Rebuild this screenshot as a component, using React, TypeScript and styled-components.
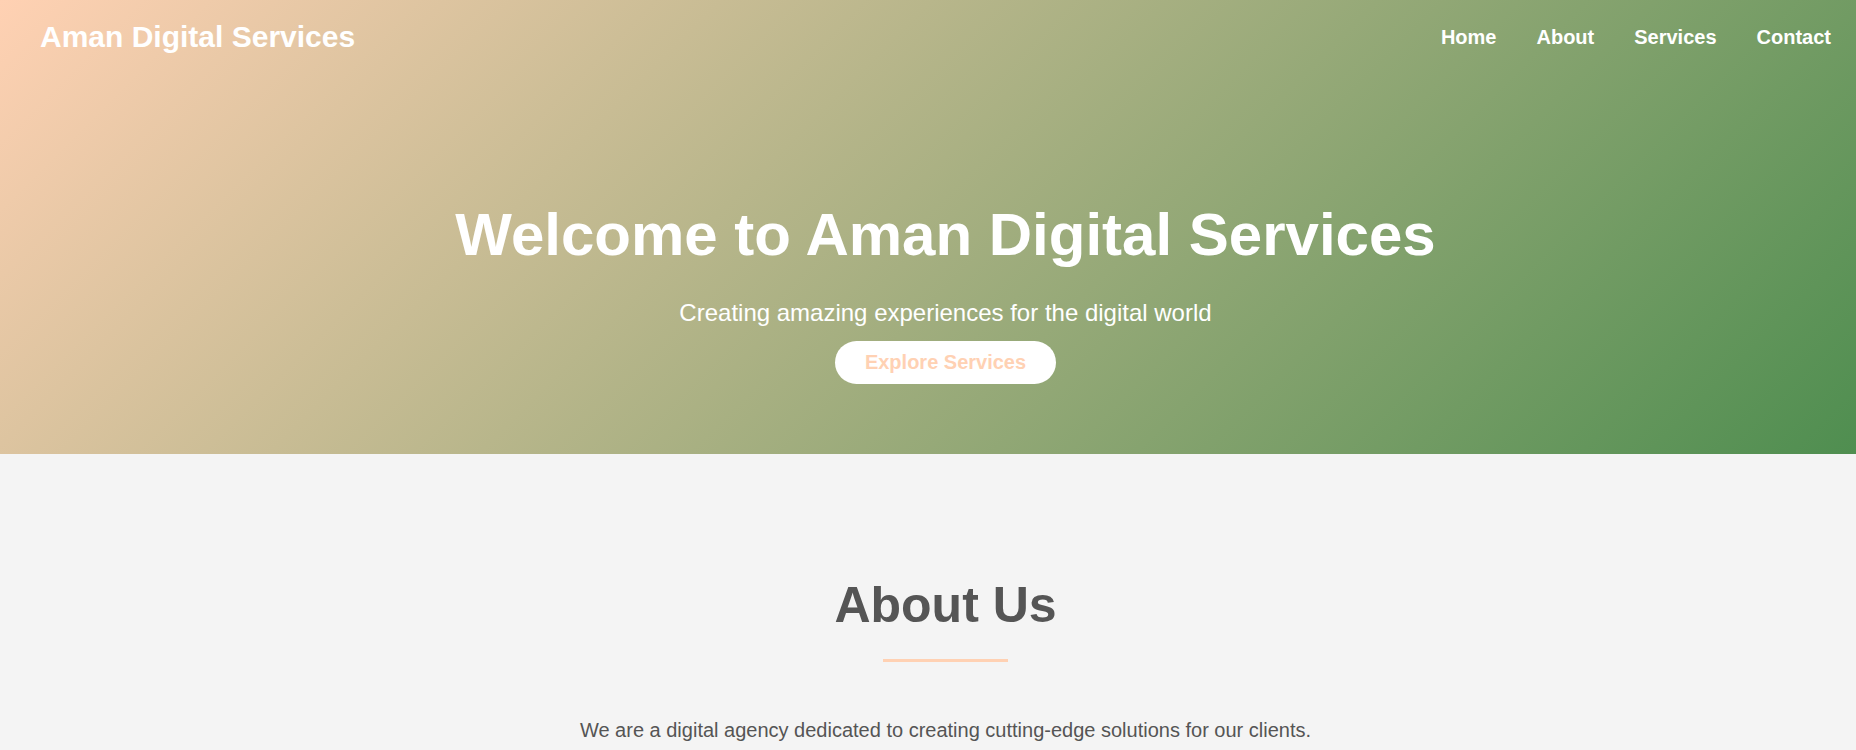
import React from "react";
import styled, { createGlobalStyle } from "styled-components";

const GlobalStyle = createGlobalStyle`
  * { box-sizing: border-box; }
  html, body { margin: 0; padding: 0; }
  body {
    font-family: "Liberation Sans", Arial, sans-serif;
    background: #f4f4f4;
    color: #555555;
  }
`;

const Hero = styled.section`
  background: linear-gradient(135deg, #ffd1b3 0%, #4f8e50 100%);
  color: #ffffff;
  padding-bottom: 70px;
`;

const Header = styled.header`
  display: flex;
  align-items: center;
  justify-content: space-between;
  padding: 20px 25px 20px 40px;
`;

const Logo = styled.div`
  font-size: 30px;
  font-weight: 700;
  line-height: normal;
`;

const NavList = styled.nav`
  display: flex;
  gap: 40px;
`;

const NavLink = styled.a`
  color: #ffffff;
  font-size: 20px;
  font-weight: 700;
  text-decoration: none;
`;

const HeroContent = styled.div`
  display: flex;
  flex-direction: column;
  align-items: center;
  text-align: center;
  padding: 126px 0 0 35px;
`;

const HeroTitle = styled.h1`
  margin: 0;
  font-size: 60px;
  font-weight: 700;
  line-height: normal;
`;

const HeroSubtitle = styled.p`
  margin: 30px 0 14px;
  font-size: 24px;
  line-height: normal;
`;

const CtaButton = styled.a`
  display: inline-block;
  background: #ffffff;
  color: #ffd1b3;
  font-size: 20px;
  font-weight: 700;
  padding: 10px 30px;
  border-radius: 30px;
  text-decoration: none;
  line-height: normal;
`;

const About = styled.section`
  background: #f4f4f4;
  display: flex;
  flex-direction: column;
  align-items: center;
  text-align: center;
  padding: 122px 0 80px 35px;
`;

const SectionTitle = styled.h2`
  margin: 0;
  font-size: 50px;
  font-weight: 700;
  color: #555555;
  line-height: normal;
`;

const Divider = styled.div`
  width: 125px;
  height: 3px;
  background: #ffd1b3;
  margin: 25px 0 57px;
`;

const AboutText = styled.p`
  margin: 0;
  font-size: 20px;
  line-height: normal;
  color: #555555;
`;

export default function App() {
  return (
    <>
      <GlobalStyle />
      <Hero>
        <Header>
          <Logo>Aman Digital Services</Logo>
          <NavList>
            <NavLink href="#home">Home</NavLink>
            <NavLink href="#about">About</NavLink>
            <NavLink href="#services">Services</NavLink>
            <NavLink href="#contact">Contact</NavLink>
          </NavList>
        </Header>
        <HeroContent>
          <HeroTitle>Welcome to Aman Digital Services</HeroTitle>
          <HeroSubtitle>Creating amazing experiences for the digital world</HeroSubtitle>
          <CtaButton href="#services">Explore Services</CtaButton>
        </HeroContent>
      </Hero>
      <About id="about">
        <SectionTitle>About Us</SectionTitle>
        <Divider />
        <AboutText>
          We are a digital agency dedicated to creating cutting-edge solutions for our clients.
        </AboutText>
      </About>
    </>
  );
}
